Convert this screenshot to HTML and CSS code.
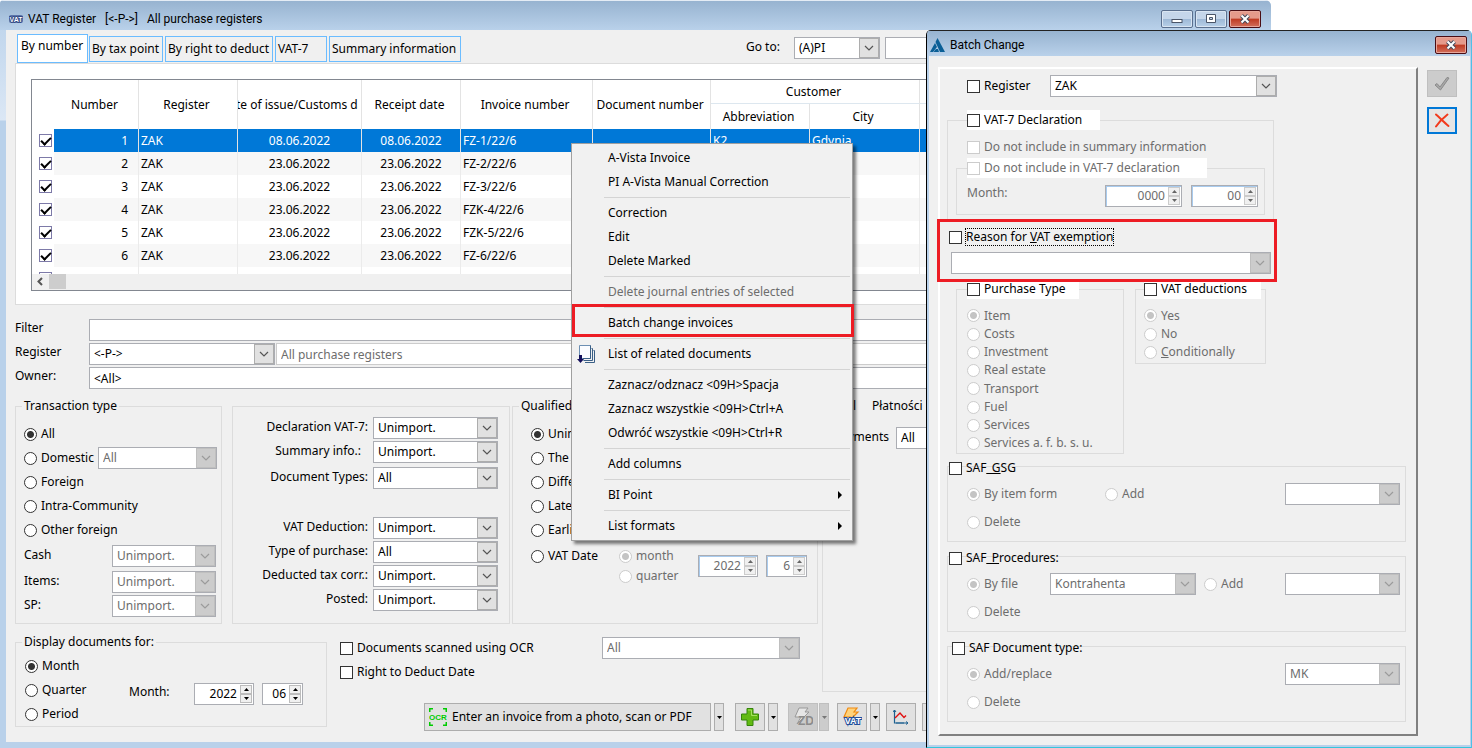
FILE: index.html
```html
<!DOCTYPE html>
<html lang="en">
<head>
<meta charset="utf-8">
<title>VAT Register</title>
<link rel="stylesheet" href="styles.css">
</head>
<body>
<svg class="defs" aria-hidden="true">
  <symbol id="chev" viewBox="0 0 10 6"><path d="M1 1l4 4 4-4" fill="none" stroke="currentColor" stroke-width="1.2"/></symbol>
  <symbol id="up" viewBox="0 0 5 3"><path d="M0 3L2.500 0 5 3z" fill="currentColor"/></symbol>
  <symbol id="down" viewBox="0 0 5 3"><path d="M0 0h5L2.500 3z" fill="currentColor"/></symbol>
</svg>
<div class="desktop">
<main class="window">
  <header class="titlebar">
    <svg class="vat-icon" width="14" height="10" viewBox="0 0 14 10"><rect width="14" height="8" y="1" rx="2" fill="#5a73a8"/><text x="7" y="8" text-anchor="middle" class="badge-text">VAT</text></svg>
    <h1 class="title">VAT Register &nbsp; [&lt;-P-&gt;] &nbsp; All purchase registers</h1>
    <div class="controls">
      <button class="ctl" aria-label="Minimize"><svg width="12" height="10" viewBox="0 0 12 10"><rect x="1" y="5.500" width="10" height="3" fill="#fff" stroke="#4a5568"/></svg></button>
      <button class="ctl" aria-label="Maximize"><svg width="12" height="10" viewBox="0 0 12 10"><path d="M1.500.500h9v8h-9zM4.500 3.500h3v2h-3z" fill="#fff" stroke="#4a5568" fill-rule="evenodd"/></svg></button>
      <button class="ctl close" aria-label="Close"><svg width="12" height="10" viewBox="0 0 12 10"><path d="M2.500 1.500l7 7M9.500 1.500l-7 7" stroke="#444a5c" stroke-width="4"/><path d="M2.500 1.500l7 7M9.500 1.500l-7 7" stroke="#fff" stroke-width="2"/></svg></button>
    </div>
  </header>
  <div class="window-body">
    <div class="tabbar">
      <button class="tab active">By number</button>
      <button class="tab t2">By tax point</button>
      <button class="tab t3">By right to deduct</button>
      <button class="tab t4">VAT-7</button>
      <button class="tab t5">Summary information</button>
      <label class="goto" for="goto">Go to:</label>
      <span class="combo goto-combo"><select id="goto"><option>(A)PI</option></select><span class="arrow"><svg><use href="#chev"/></svg></span></span>
      <input class="field goto-field" type="text" aria-label="Go to value">
    </div>
    <section class="panel">
      <div class="grid-box">
        <div class="grid-view">
          <table class="grid">
            <colgroup><col class="c0"><col class="c1"><col class="c2"><col class="c3"><col class="c4"><col class="c5"><col class="c6"><col class="c7"><col class="c8"><col></colgroup>
            <thead>
              <tr><th rowspan="2" class="nb"></th><th rowspan="2">Number</th><th rowspan="2">Register</th><th rowspan="2"><div class="clip">Date of issue/Customs date</div></th><th rowspan="2">Receipt date</th><th rowspan="2">Invoice number</th><th rowspan="2">Document number</th><th colspan="2" class="group">Customer</th><th class="group"></th></tr>
              <tr><th>Abbreviation</th><th>City</th><th></th></tr>
            </thead>
            <tbody>
              <tr class="selected"><td class="nb"><input type="checkbox" checked aria-label="Row 1"></td><td class="num">1</td><td>ZAK</td><td class="mid">08.06.2022</td><td class="mid">08.06.2022</td><td>FZ-1/22/6</td><td></td><td>K2</td><td>Gdynia</td><td></td></tr>
              <tr><td class="nb"><input type="checkbox" checked aria-label="Row 2"></td><td class="num">2</td><td>ZAK</td><td class="mid">23.06.2022</td><td class="mid">23.06.2022</td><td>FZ-2/22/6</td><td></td><td></td><td></td><td></td></tr>
              <tr><td class="nb"><input type="checkbox" checked aria-label="Row 3"></td><td class="num">3</td><td>ZAK</td><td class="mid">23.06.2022</td><td class="mid">23.06.2022</td><td>FZ-3/22/6</td><td></td><td></td><td></td><td></td></tr>
              <tr><td class="nb"><input type="checkbox" checked aria-label="Row 4"></td><td class="num">4</td><td>ZAK</td><td class="mid">23.06.2022</td><td class="mid">23.06.2022</td><td>FZK-4/22/6</td><td></td><td></td><td></td><td></td></tr>
              <tr><td class="nb"><input type="checkbox" checked aria-label="Row 5"></td><td class="num">5</td><td>ZAK</td><td class="mid">23.06.2022</td><td class="mid">23.06.2022</td><td>FZK-5/22/6</td><td></td><td></td><td></td><td></td></tr>
              <tr><td class="nb"><input type="checkbox" checked aria-label="Row 6"></td><td class="num">6</td><td>ZAK</td><td class="mid">23.06.2022</td><td class="mid">23.06.2022</td><td>FZ-6/22/6</td><td></td><td></td><td></td><td></td></tr>
              <tr><td class="nb"><input type="checkbox" aria-label="Row 7"></td><td></td><td></td><td></td><td></td><td></td><td></td><td></td><td></td><td></td></tr>
            </tbody>
          </table>
        </div>
        <div class="hscroll"><svg width="17" height="15" viewBox="0 0 17 15"><path d="M10 4L6.500 7.500 10 11" fill="none" stroke="#555" stroke-width="2"/></svg><span class="thumb"></span></div>
      </div>
    </section>

    <div class="filters">
      <label for="filter">Filter</label>
      <input class="field" id="filter" type="text">
      <label for="reg">Register</label>
      <div class="pair">
        <span class="combo reg-combo"><select id="reg"><option>&lt;-P-&gt;</option></select><span class="arrow"><svg><use href="#chev"/></svg></span></span>
        <input class="field faint" type="text" value="All purchase registers" disabled aria-label="Register name">
      </div>
      <label for="owner">Owner:</label>
      <input class="field" id="owner" type="text" value="&lt;All&gt;">
    </div>

    <div class="lower">
      <div class="groups">
        <fieldset class="transaction">
          <legend>Transaction type</legend>
          <div class="line"><label class="opt"><input type="radio" name="tt" checked>All</label></div>
          <div class="line"><label class="opt domestic"><input type="radio" name="tt">Domestic</label><span class="combo off grow"><select disabled aria-label="Domestic kind"><option>All</option></select><span class="arrow"><svg><use href="#chev"/></svg></span></span></div>
          <div class="line"><label class="opt"><input type="radio" name="tt">Foreign</label></div>
          <div class="line"><label class="opt"><input type="radio" name="tt">Intra-Community</label></div>
          <div class="line"><label class="opt"><input type="radio" name="tt">Other foreign</label></div>
          <div class="pairs">
            <label for="cash">Cash</label><span class="combo off"><select id="cash" disabled><option>Unimport.</option></select><span class="arrow"><svg><use href="#chev"/></svg></span></span>
            <label for="items">Items:</label><span class="combo off"><select id="items" disabled><option>Unimport.</option></select><span class="arrow"><svg><use href="#chev"/></svg></span></span>
            <label for="sp">SP:</label><span class="combo off"><select id="sp" disabled><option>Unimport.</option></select><span class="arrow"><svg><use href="#chev"/></svg></span></span>
          </div>
        </fieldset>

        <fieldset class="declaration">
          <label for="d1">Declaration VAT-7:</label><span class="combo"><select id="d1"><option>Unimport.</option></select><span class="arrow"><svg><use href="#chev"/></svg></span></span>
          <label for="d2" class="summary">Summary info.:</label><span class="combo"><select id="d2"><option>Unimport.</option></select><span class="arrow"><svg><use href="#chev"/></svg></span></span>
          <label for="d3">Document Types:</label><span class="combo"><select id="d3"><option>All</option></select><span class="arrow"><svg><use href="#chev"/></svg></span></span>
          <label for="d4">VAT Deduction:</label><span class="combo"><select id="d4"><option>Unimport.</option></select><span class="arrow"><svg><use href="#chev"/></svg></span></span>
          <label for="d5">Type of purchase:</label><span class="combo"><select id="d5"><option>All</option></select><span class="arrow"><svg><use href="#chev"/></svg></span></span>
          <label for="d6">Deducted tax corr.:</label><span class="combo"><select id="d6"><option>Unimport.</option></select><span class="arrow"><svg><use href="#chev"/></svg></span></span>
          <label for="d7">Posted:</label><span class="combo"><select id="d7"><option>Unimport.</option></select><span class="arrow"><svg><use href="#chev"/></svg></span></span>
        </fieldset>

        <fieldset class="qualified">
          <legend>Qualified as of</legend>
          <div class="line"><label class="opt"><input type="radio" name="q" checked>Unimport.</label></div>
          <div class="line"><label class="opt"><input type="radio" name="q">The same</label></div>
          <div class="line"><label class="opt"><input type="radio" name="q">Different</label></div>
          <div class="line"><label class="opt"><input type="radio" name="q">Later</label></div>
          <div class="line"><label class="opt"><input type="radio" name="q">Earlier</label></div>
          <div class="vat-date">
            <label class="opt"><input type="radio" name="q">VAT Date</label>
            <div class="period off">
              <label class="opt"><input type="radio" name="vp" checked disabled>month</label>
              <label class="opt"><input type="radio" name="vp" disabled>quarter</label>
            </div>
            <span class="spin off s60"><input type="text" value="2022" disabled aria-label="VAT year"><span class="steps"><button disabled aria-label="Up"><svg><use href="#up"/></svg></button><button disabled aria-label="Down"><svg><use href="#down"/></svg></button></span></span>
            <span class="spin off s41"><input type="text" value="6" disabled aria-label="VAT month"><span class="steps"><button disabled aria-label="Up"><svg><use href="#up"/></svg></button><button disabled aria-label="Down"><svg><use href="#down"/></svg></button></span></span>
          </div>
        </fieldset>
      </div>

      <fieldset class="payments">
        <legend><span class="leg-a">Total</span><span>Płatności</span></legend>
        <div class="pay-row"><label for="pay">Payments</label><span class="combo grow"><select id="pay"><option>All</option></select><span class="arrow"><svg><use href="#chev"/></svg></span></span></div>
      </fieldset>

      <fieldset class="display">
        <legend>Display documents for:</legend>
        <div class="display-row">
          <div class="display-opts">
            <label class="opt"><input type="radio" name="dd" checked>Month</label>
            <label class="opt"><input type="radio" name="dd">Quarter</label>
            <label class="opt"><input type="radio" name="dd">Period</label>
          </div>
          <label for="my" class="month">Month:</label>
          <span class="spin s60"><input id="my" type="text" value="2022"><span class="steps"><button aria-label="Up"><svg><use href="#up"/></svg></button><button aria-label="Down"><svg><use href="#down"/></svg></button></span></span>
          <span class="spin s41"><input type="text" value="06" aria-label="Month number"><span class="steps"><button aria-label="Up"><svg><use href="#up"/></svg></button><button aria-label="Down"><svg><use href="#down"/></svg></button></span></span>
        </div>
      </fieldset>

      <div class="options">
        <div class="line"><label class="opt ocr"><input type="checkbox">Documents scanned using OCR</label><span class="combo off ocr-combo"><select disabled aria-label="OCR status"><option>All</option></select><span class="arrow"><svg><use href="#chev"/></svg></span></span></div>
        <div class="line"><label class="opt"><input type="checkbox">Right to Deduct Date</label></div>
      </div>

      <div class="toolbar">
        <button class="btn wide">
          <svg width="18" height="18" viewBox="0 0 18 18"><path d="M.750 4V.750H4M14 .750h3.250V4M17.250 14v3.250H14M4 17.250H.750V14" fill="none" stroke="#0c0" stroke-width="1.500"/><text x="9" y="12" text-anchor="middle" class="ocr-text">OCR</text></svg>
          Enter an invoice from a photo, scan or PDF</button>
        <button class="btn drop" aria-label="Scan options"><svg><use href="#down"/></svg></button>
        <button class="btn icon gap-a" aria-label="Add"><svg width="18" height="18" viewBox="0 0 18 18"><path d="M6 .500h6V6h5.500v6H12v5.500H6V12H.500V6H6z" fill="#62ba12" stroke="#35850a"/><path d="M7 2h3.500v5.500H16" fill="none" stroke="#a5e060"/></svg></button>
        <button class="btn drop" aria-label="Add options"><svg><use href="#down"/></svg></button>
        <button class="btn icon gap-b dim" disabled aria-label="ZD"><svg width="20" height="20" viewBox="0 0 20 20"><path d="M6 1h9l-3 4h4L4 17l4-7H2z" fill="#e6e6e6" stroke="#999"/><text x="13" y="18" text-anchor="middle" class="zd-text">ZD</text></svg></button>
        <button class="btn drop dim tight" disabled aria-label="ZD options"><svg><use href="#down"/></svg></button>
        <button class="btn icon gap-c" aria-label="VAT"><svg width="20" height="20" viewBox="0 0 20 20"><path d="M6 1h9l-3 4h4L4 17l4-7H2z" fill="#ffd27a" stroke="#f08a10" stroke-width="1.200"/><text x="11" y="17" text-anchor="middle" class="vat-text">VAT</text></svg></button>
        <button class="btn drop" aria-label="VAT options"><svg><use href="#down"/></svg></button>
        <button class="btn icon gap-d" aria-label="Chart"><svg width="16" height="16" viewBox="0 0 16 16"><path d="M1.500 1v13H15" fill="none" stroke="#1c6090" stroke-width="1.200"/><path d="M0 3l1.500-2L3 3M13 12.500l2 1.500-2 1.500M4 15v-2M6 15v-2M8 15v-2M10 15v-2" fill="none" stroke="#1c6090"/><path d="M2 9l5-5 4 4.500 2-2" fill="none" stroke="#e01010" stroke-width="1.400"/></svg></button>
        <button class="btn icon gap-e" aria-label="More"></button>
      </div>
    </div>
  </div>
</main>

<nav class="menu">
  <button>A-Vista Invoice</button>
  <button>PI A-Vista Manual Correction</button>
  <hr>
  <button>Correction</button>
  <button>Edit</button>
  <button>Delete Marked</button>
  <hr>
  <button disabled>Delete journal entries of selected</button>
  <hr>
  <button class="marked">Batch change invoices</button>
  <hr>
  <button class="with-icon"><svg width="19" height="19" viewBox="0 0 19 19"><path d="M14.500 3.500h1v12h-9M16.500 5.500h1v12H8" fill="none" stroke="#3a5f86"/><path d="M2.500.500h11v13h-11z" fill="#fbfcff" stroke="#6d8fb3"/><path d="M13.500.500v13H6" fill="none" stroke="#3a5f86"/><path d="M2 10h3v4h2l-3.500 4L0 14h2z" fill="#14105c"/></svg>List of related documents</button>
  <hr>
  <button>Zaznacz/odznacz &lt;09H&gt;Spacja</button>
  <button>Zaznacz wszystkie &lt;09H&gt;Ctrl+A</button>
  <button>Odwróć wszystkie &lt;09H&gt;Ctrl+R</button>
  <hr>
  <button>Add columns</button>
  <hr>
  <button class="sub">BI Point<svg width="4" height="8" viewBox="0 0 4 8"><path d="M0 0l4 4-4 4z"/></svg></button>
  <hr>
  <button class="sub">List formats<svg width="4" height="8" viewBox="0 0 4 8"><path d="M0 0l4 4-4 4z"/></svg></button>
</nav>

<section class="dialog">
  <header class="titlebar small">
    <svg width="15" height="14" viewBox="0 0 15 14"><path d="M7.500 0L5.500 4l4.500 10h5z" fill="#0b5f96"/><path d="M5 5L0 14h3l4-5zM6 11l-2.500 3H9l-1-3z" fill="#0b5f96"/></svg>
    <h2 class="title">Batch Change</h2>
    <div class="controls"><button class="ctl close" aria-label="Close"><svg width="12" height="10" viewBox="0 0 12 10"><path d="M2.500 1.500l7 7M9.500 1.500l-7 7" stroke="#444a5c" stroke-width="4"/><path d="M2.500 1.500l7 7M9.500 1.500l-7 7" stroke="#fff" stroke-width="2"/></svg></button></div>
  </header>
  <div class="dialog-body">
    <div class="sheet">
      <div class="reg-row"><label class="opt"><input type="checkbox">Register</label><span class="combo"><select aria-label="Register value"><option>ZAK</option></select><span class="arrow"><svg><use href="#chev"/></svg></span></span></div>

      <fieldset class="vat7">
        <legend class="white"><label class="opt"><input type="checkbox">VAT-7 Declaration</label></legend>
        <label class="opt off incl"><input type="checkbox" disabled>Do not include in summary information</label>
        <fieldset class="vat7-inner off">
          <legend class="white"><label class="opt"><input type="checkbox" disabled>Do not include in VAT-7 declaration</label></legend>
          <div class="month-row">
            <label for="bm">Month:</label>
            <span class="spin off s77"><input id="bm" type="text" value="0000" disabled><span class="steps"><button disabled aria-label="Up"><svg><use href="#up"/></svg></button><button disabled aria-label="Down"><svg><use href="#down"/></svg></button></span></span>
            <span class="spin off s67"><input type="text" value="00" disabled aria-label="Month number"><span class="steps"><button disabled aria-label="Up"><svg><use href="#up"/></svg></button><button disabled aria-label="Down"><svg><use href="#down"/></svg></button></span></span>
          </div>
        </fieldset>
      </fieldset>

      <div class="reason">
        <label class="opt"><input type="checkbox"><span class="focus">Reason for <u>V</u>AT exemption</span></label>
        <span class="combo off"><select disabled aria-label="Reason"><option></option></select><span class="arrow"><svg><use href="#chev"/></svg></span></span>
      </div>

      <div class="types">
        <fieldset class="purchase">
          <legend class="white"><label class="opt"><input type="checkbox">Purchase Type</label></legend>
          <div class="radios off">
            <label class="opt"><input type="radio" name="pt" checked disabled>Item</label>
            <label class="opt"><input type="radio" name="pt" disabled>Costs</label>
            <label class="opt"><input type="radio" name="pt" disabled>Investment</label>
            <label class="opt"><input type="radio" name="pt" disabled>Real estate</label>
            <label class="opt"><input type="radio" name="pt" disabled>Transport</label>
            <label class="opt"><input type="radio" name="pt" disabled>Fuel</label>
            <label class="opt"><input type="radio" name="pt" disabled>Services</label>
            <label class="opt"><input type="radio" name="pt" disabled>Services a. f. b. s. u.</label>
          </div>
        </fieldset>
        <fieldset class="deductions">
          <legend class="white"><label class="opt"><input type="checkbox">VAT deductions</label></legend>
          <div class="radios off">
            <label class="opt"><input type="radio" name="vd" checked disabled>Yes</label>
            <label class="opt"><input type="radio" name="vd" disabled>No</label>
            <label class="opt"><input type="radio" name="vd" disabled><span><u>C</u>onditionally</span></label>
          </div>
        </fieldset>
      </div>

      <fieldset class="saf">
        <legend><label class="opt"><input type="checkbox"><span>SAF<u>_G</u>SG</span></label></legend>
        <div class="saf-row off">
          <label class="opt w138"><input type="radio" name="s1" checked disabled>By item form</label>
          <label class="opt"><input type="radio" name="s1" disabled>Add</label>
          <span class="combo off end"><select disabled aria-label="GSG code"><option></option></select><span class="arrow"><svg><use href="#chev"/></svg></span></span>
        </div>
        <div class="saf-row off"><label class="opt"><input type="radio" name="s1" disabled>Delete</label></div>
      </fieldset>

      <fieldset class="saf">
        <legend><label class="opt"><input type="checkbox"><span>SAF<u>_P</u>rocedures:</span></label></legend>
        <div class="saf-row off">
          <label class="opt w83"><input type="radio" name="s2" checked disabled>By file</label>
          <span class="combo off file"><select disabled aria-label="File"><option>Kontrahenta</option></select><span class="arrow"><svg><use href="#chev"/></svg></span></span>
          <label class="opt"><input type="radio" name="s2" disabled>Add</label>
          <span class="combo off end"><select disabled aria-label="Procedure code"><option></option></select><span class="arrow"><svg><use href="#chev"/></svg></span></span>
        </div>
        <div class="saf-row off"><label class="opt"><input type="radio" name="s2" disabled>Delete</label></div>
      </fieldset>

      <fieldset class="saf doc">
        <legend><label class="opt"><input type="checkbox">SAF Document type:</label></legend>
        <div class="saf-row off">
          <label class="opt"><input type="radio" name="s3" checked disabled>Add/replace</label>
          <span class="combo off end"><select disabled aria-label="Document type"><option>MK</option></select><span class="arrow"><svg><use href="#chev"/></svg></span></span>
        </div>
        <div class="saf-row off"><label class="opt"><input type="radio" name="s3" disabled>Delete</label></div>
      </fieldset>
    </div>
    <div class="side">
      <button class="ok" disabled aria-label="Confirm"><svg width="16" height="14" viewBox="0 0 16 14"><path d="M1 8l2-1.500L6 10l7-9.500L15 1 6.500 13z" fill="#a8a8a8" stroke="#8a8a8a"/></svg></button>
      <button class="cancel" aria-label="Cancel"><svg width="16" height="15" viewBox="0 0 16 15"><path d="M2 1.500C6 5 10 9.500 14.500 13M13.500 1.500C9 5 5 9 2 13.500" fill="none" stroke="#f23a1c" stroke-width="2" stroke-linecap="round"/></svg></button>
    </div>
  </div>
</section>
</div>
</body>
</html>
```
FILE: styles.css
```css
* { box-sizing: border-box; }
:root { --ui: "Noto Sans", "DejaVu Sans Condensed", sans-serif; }
html, body { height: 100%; }
body { margin: 0; background: #fff; overflow: hidden; font: 12px/16px var(--ui); color: #000; }
button, input, select { font: inherit; color: inherit; margin: 0; }
button { padding: 0; }
fieldset { margin: 0; padding: 0; border: 1px solid #dcdcdc; min-width: 0; }
legend { padding: 0 2px; white-space: nowrap; }
label { white-space: nowrap; }
.defs { display: none; }
.desktop { position: relative; height: 100%; overflow: hidden; }

/* windows */
.window { position: absolute; inset: 0 201px 0 0; display: flex; flex-direction: column; background: linear-gradient(#b9d1ea, #dbe7f5 120px, #b9d1ea 121px); border-radius: 4px 6px 0 0; overflow: hidden; }
.titlebar { display: flex; align-items: center; height: 30px; padding: 6px 10px 0 9px; background: linear-gradient(#97b3d0, #b9d1ea); flex: none; border-top: 1px solid #e4ecf5; }
.titlebar .title { margin: 0 0 0 5px; flex: 1; font: 12px/16px Roboto, "Open Sans", sans-serif; white-space: nowrap; }
.titlebar.small { height: 26px; padding: 2px 4px 0 3px; border-top: 1px solid #222; }
.controls { display: flex; gap: 2px; }
.ctl { display: flex; align-items: center; justify-content: center; width: 32px; height: 18px; border: 1px solid #5a6f8e; border-radius: 2px; background: linear-gradient(#c5d6ea 50%, #9db8d6 50%, #b8d0e8); box-shadow: inset 0 0 0 1px #d9e5f2; }
.ctl.close { border-color: #4a0d14; background: linear-gradient(#e59a8b 45%, #bf3a22 50%, #d2705c); box-shadow: inset 0 0 0 1px #e8a79b; }
.badge-text { font: bold 7px "Liberation Sans", sans-serif; fill: #fff; stroke: #12296b; stroke-width: 1px; paint-order: stroke; }
.window-body { flex: 1; margin: 0 6px 6px; padding: 0 9px; background: #f0f0f0; }

/* tabs */
.tabbar { display: flex; align-items: flex-start; height: 33px; padding: 4px 0 0 2px; }
.tab { height: 26px; margin: 2px 0 0 2px; padding: 0 0 0 2px; border: 1px solid #6bbcff; background: #f0f0f0; text-align: left; white-space: nowrap; flex: none; }
.tab.active { height: 29px; width: 71px; margin: 0 -1px 0 0; padding: 0 3px 6px; background: #fff; }
.t2 { width: 74px; } .t3 { width: 108px; } .t4 { width: 52px; } .t5 { width: 132px; }
.goto { margin-left: 285px; width: 48px; padding-top: 5px; }
.goto-combo { width: 86px; margin: 3px 5px 0 0; }
.goto-field { flex: 1; margin-top: 3px; }

/* fields */
.field { height: 22px; min-width: 0; border: 1px solid #abadb3; background: #fff; padding: 0 4px; width: 100%; }
.field.faint { border-color: #ccc; color: #6d6d6d; }
.combo { display: flex; height: 22px; border: 1px solid #abadb3; background: #fff; min-width: 0; flex: none; }
.combo select { appearance: none; flex: 1; min-width: 0; width: 0; border: 0; background: transparent; padding: 0 4px; height: 20px; opacity: 1; }
.arrow { display: flex; align-items: center; justify-content: center; width: 20px; border: 1px solid #adadad; background: #e1e1e1; color: #555; flex: none; }
.arrow svg { width: 10px; height: 6px; }
.off, .off select { color: #6d6d6d; }
.combo.off .arrow { background: #ccc; border-color: #bfbfbf; color: #9b9b9b; }
.combo.grow { flex: 1; }
.spin { display: flex; height: 22px; border: 1px solid #abadb3; background: #fff; flex: none; padding: 1px; }
.spin.off { box-shadow: inset 1px 0 #a8cbee, inset 0 1px #a8cbee; }
.spin input { flex: 1; min-width: 0; width: 0; border: 0; background: transparent; padding: 0 3px 0 0; text-align: right; }
.steps { display: flex; flex-direction: column; width: 12px; }
.steps button { flex: 1; display: flex; align-items: center; justify-content: center; border: 1px solid #bcbcbc; background: #f0f0f0; color: #000; }
.steps svg, .drop svg { width: 5px; height: 3px; }
.steps button:disabled { color: #666; border-color: #ccc; }
.s60 { width: 60px; } .s41 { width: 41px; } .s77 { width: 77px; } .s67 { width: 67px; }
.opt { display: inline-flex; align-items: center; gap: 4px; }
input[type=radio], input[type=checkbox] { appearance: none; width: 13px; height: 13px; border: 1px solid #333; background: #fff; flex: none; }
input[type=radio] { border-radius: 50%; }
input[type=radio]:checked { background: radial-gradient(circle, #333 3px, #fff 4px); }
input[type=radio]:disabled, input[type=checkbox]:disabled { border-color: #ccc; }
input[type=radio]:checked:disabled { background: radial-gradient(circle, #c4c4c4 3px, #fff 4px); }

/* register list */
.panel { border: 1px solid #dcdcdc; background: #fff; padding: 15px 15px 13px; }
.grid-box { border: 1px solid #828790; }
.grid-view { height: 194px; overflow: hidden; }
.grid { width: 100%; table-layout: fixed; border-collapse: separate; border-spacing: 0; }
.c0 { width: 22px; } .c1 { width: 85px; } .c2 { width: 99px; } .c3 { width: 124px; } .c4 { width: 99px; } .c5 { width: 132px; } .c6 { width: 118px; } .c7 { width: 99px; } .c8 { width: 110px; }
.grid th { height: 25px; padding: 0 3px 0 0; font-weight: normal; border-right: 1px solid #e3e3e3; white-space: nowrap; }
.grid th.group { height: 24px; border-bottom: 1px solid #dde7ef; }
.grid th.nb, .grid td.nb { border-right: 0; background: #fff; padding: 0 0 0 7px; }
.clip { display: flex; justify-content: center; overflow: hidden; }
.grid td { height: 23px; padding: 0 2px; line-height: 16px; border-right: 1px solid #ebebeb; }
.grid tbody tr:nth-child(even) td { background: #f7f7f7; }
.grid tbody tr td.nb, .grid tbody tr:nth-child(even) td.nb { background: #fff; }
.grid tbody tr.selected td:not(.nb) { background: #0078d7; color: #fff; border-color: #e3e3e3; }
.grid td.num { text-align: right; padding-right: 10px; }
.grid td.mid { text-align: center; }
.grid input { display: block; border-color: #7d7aa8; }
.grid input:checked::before { content: ""; display: block; width: 8px; height: 4px; margin: 2px 0 0 1px; border: solid #000; border-width: 0 0 2px 2px; transform: rotate(-45deg); }
.hscroll { display: flex; height: 16px; background: #f0f0f0; }
.thumb { width: 17px; height: 15px; background: #cdcdcd; }

/* filters */
.filters { display: grid; grid-template-columns: 74px 1fr; row-gap: 2px; margin-top: 14px; }
.filters > label { padding-top: 1px; }
.pair { display: flex; gap: 1px; }
.reg-combo { width: 186px; }

/* criteria */
.lower { display: grid; grid-template-columns: 312px 491px 1fr; grid-template-rows: auto 68px auto; margin-top: 9px; }
.groups { grid-column: 1 / 3; display: flex; min-height: 226px; }
.line { display: flex; align-items: center; height: 24px; }
.transaction { width: 207px; padding: 8px 5px 0 8px; }
.transaction legend { margin-left: -2px; }
.domestic { width: 74px; }
.transaction .grow { margin-right: -1px; }
.pairs { display: grid; grid-template-columns: 88px 104px; grid-template-rows: 26px 24px 22px; padding-top: 3px; }
.pairs label { line-height: 20px; }
.declaration { width: 278px; margin: 8px 2px 0 10px; padding: 10px 0 0; display: grid; grid-template-columns: 140px 125px; grid-template-rows: 24px 26px 50px 24px 24px 24px 24px; }
.declaration label { text-align: right; padding-right: 5px; line-height: 20px; }
.declaration .summary { padding-right: 12px; }
.qualified { width: 306px; padding: 8px 0 0 18px; }
.qualified legend { margin-left: -12px; }
.vat-date { display: flex; align-items: flex-start; padding-top: 4px; }
.vat-date > .opt { width: 88px; height: 20px; }
.period { display: flex; flex-direction: column; width: 79px; }
.period .opt { height: 20px; }
.vat-date .spin { margin: 9px 8px 0 0; }
.payments { grid-column: 3; grid-row: 1 / 3; margin-left: 4px; padding-top: 13px; }
.payments legend { margin-left: 3px; width: 100%; }
.leg-a { display: inline-block; width: 28px; margin-right: 16px; text-align: right; }
.pay-row { display: flex; }
.pay-row label { width: 66px; text-align: right; margin-right: 7px; line-height: 20px; }
.display { align-self: start; height: 93px; margin-top: 10px; padding-left: 9px; }
.display legend { margin-left: -3px; }
.display-row { display: flex; align-items: flex-start; padding-top: 4px; }
.display-opts { display: flex; flex-direction: column; width: 104px; }
.display-opts .opt { height: 24px; }
.month { width: 65px; padding-top: 30px; }
.display .spin { margin: 29px 8px 0 0; }
.options { padding: 12px 0 0 13px; }
.ocr { width: 262px; }
.ocr-combo { width: 198px; }
.toolbar { grid-column: 2 / 4; display: flex; padding: 11px 0 0 97px; }
.btn { display: flex; align-items: center; justify-content: center; height: 28px; border: 1px solid #adadad; background: #e1e1e1; flex: none; }
.btn.wide { width: 287px; justify-content: flex-start; gap: 5px; padding-left: 4px; white-space: nowrap; }
.btn.icon { width: 30px; }
.btn.drop { width: 10px; margin-left: 3px; }
.btn.dim { background: #ccc; border-color: #bfbfbf; color: #777; }
.btn.tight { margin-left: 1px; }
.gap-a { margin-left: 11px; } .gap-b { margin-left: 10px; } .gap-c { margin-left: 8px; } .gap-d, .gap-e { margin-left: 6px; }
.ocr-text { font: bold 8px "Liberation Sans", sans-serif; fill: #0c0; }
.zd-text { font: bold 12px "Liberation Sans", sans-serif; fill: #8c8c8c; }
.vat-text { font: bold 9px "Liberation Sans", sans-serif; fill: #fff; stroke: #1f4f9c; stroke-width: 2px; paint-order: stroke; }

/* context menu */
.menu { position: absolute; left: 571px; top: 143px; width: 282px; padding: 2px; border: 1px solid #a0a0a0; background: #f1f1f1; box-shadow: 3px 3px 3px rgba(0, 0, 0, .5); }
.menu button { position: relative; display: flex; align-items: center; width: 100%; height: 24px; padding: 0 8px 0 34px; border: 0; background: none; text-align: left; white-space: nowrap; }
.menu button:disabled { color: #6d6d6d; }
.menu hr { height: 1px; margin: 3px 0 3px 30px; border: 0; background: #d4d4d4; }
.menu .marked::after { content: ""; position: absolute; inset: -7px -4px -2px -2px; border: 3px solid #ed1c24; }
.menu .with-icon { padding-left: 3px; gap: 12px; }
.menu .sub { justify-content: space-between; }

/* dialog */
.dialog { position: absolute; top: 30px; right: 0; bottom: 0; width: 546px; display: flex; flex-direction: column; border-left: 1px solid #000; border-right: 1px solid #4fc0e8; border-bottom: 1px solid #35c5dc; border-radius: 5px 5px 0 0; background: #b9d1ea; overflow: hidden; }
.dialog-body { flex: 1; display: flex; align-items: flex-start; margin: 0 1px 2px 2px; padding: 11px 13px 9px 9px; background: #f0f0f0; }
.sheet { flex: 1; align-self: stretch; padding: 6px 0 0 7px; border: 2px solid; border-color: #fff #808080 #808080 #fff; }
.side { display: flex; flex-direction: column; gap: 10px; margin: 3px 0 0 9px; }
.side button { display: flex; align-items: center; justify-content: center; width: 30px; height: 27px; }
.ok { border: 1px solid #bfbfbf; background: #ccc; }
.cancel { border: 2px solid #0078d7; background: #e5e5e5; }
.reg-row { display: flex; padding-left: 20px; }
.reg-row .opt { width: 83px; }
.reg-row .combo { width: 227px; }
.white { height: 20px; padding: 0; background: #fff; }
.white .opt { height: 20px; display: flex; }
.vat7 { width: 327px; margin-top: 13px; padding: 7px 8px 5px; }
.vat7 > legend { margin-left: 11px; width: 133px; }
.incl { display: flex; height: 20px; margin: 0 0 1px 11px; }
.vat7-inner { padding: 7px 0 7px 10px; }
.vat7-inner > legend { width: 240px; }
.month-row { display: flex; gap: 9px; }
.month-row label { width: 129px; }
.reason { position: relative; z-index: 1; width: 340px; margin: -2px 0 0 -10px; padding: 6px 3px 5px 9px; border: 3px solid #ed1c24; }
.reason .opt { height: 18px; gap: 3px; margin-bottom: 6px; }
.reason .combo { margin-left: 2px; }
.focus { border: 1px dotted #000; line-height: 16px; }
.types { display: flex; align-items: flex-start; gap: 11px; margin: -3px 0 0 9px; }
.purchase { width: 168px; padding: 7px 0 1px 10px; }
.purchase legend { width: 112px; }
.deductions { width: 131px; padding: 7px 0 2px 8px; }
.deductions legend { width: 117px; }
.radios { display: grid; grid-template-rows: 19px 18px 18px; grid-auto-rows: 18px; }
.purchase .radios { grid-template-rows: 19px 18px 18px 18px 19px; }
.saf { width: 459px; height: 76px; margin-top: 14px; padding: 0 5px 0 19px; }
.types + .saf { margin-top: 12px; }
.saf legend { float: left; width: 100%; height: 16px; margin: -7px 0 7px -20px; }
.saf.doc legend { padding-left: 5px; }
.saf-row { clear: both; display: flex; height: 22px; margin-bottom: 6px; }
.w138 { width: 138px; } .w83 { width: 83px; }
.file { width: 146px; margin-right: 8px; }
.end { width: 115px; margin-left: auto; }
```
